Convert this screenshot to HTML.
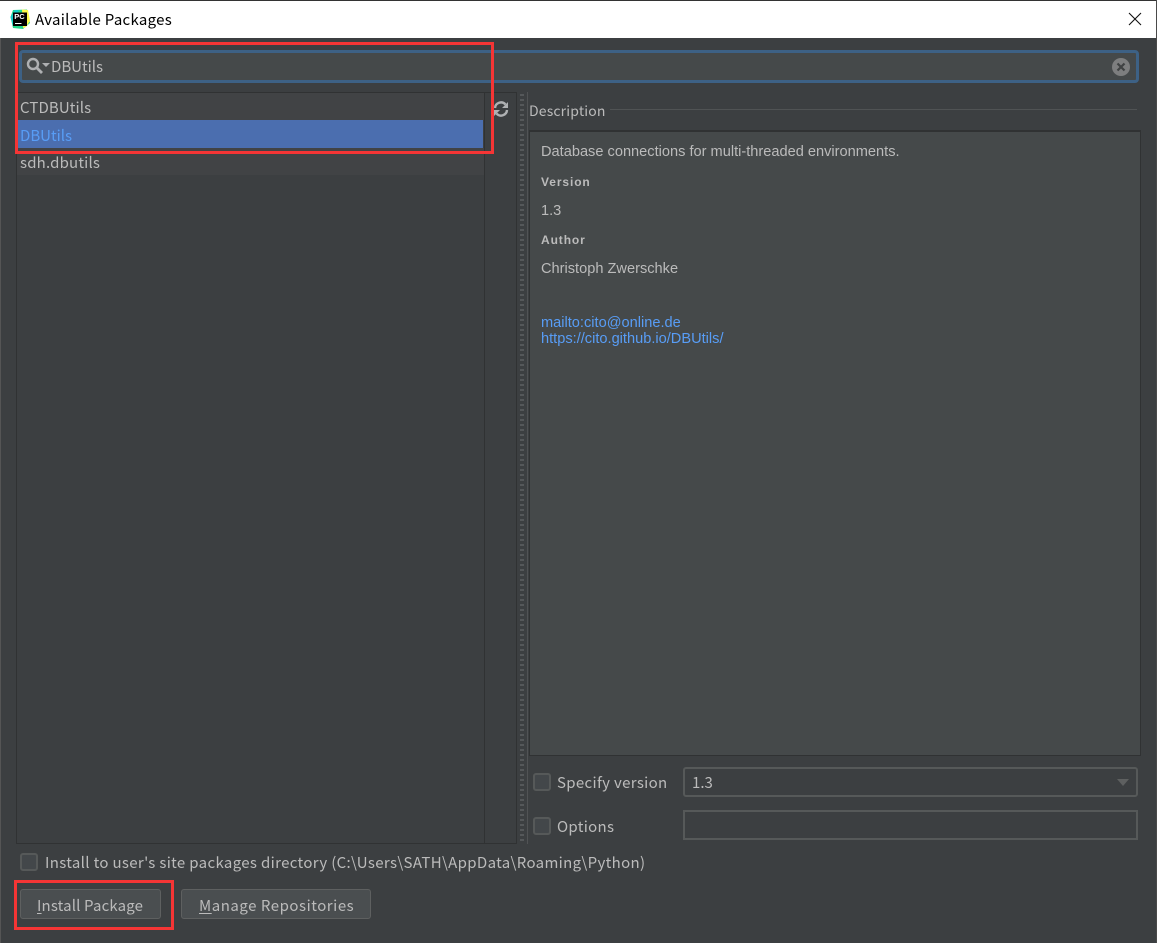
<!DOCTYPE html>
<html><head><meta charset="utf-8"><style>
html,body{margin:0;padding:0;width:1157px;height:943px;overflow:hidden;background:#3c3f41}
body{position:relative;font-family:"Noto Sans CJK SC","Liberation Sans",sans-serif;color:#bbb}
div,span.a{position:absolute;box-sizing:border-box}
.t{white-space:nowrap;font-size:15px;line-height:20px;color:#bbbbbb}
.d{white-space:nowrap;font-family:"Liberation Sans",sans-serif;font-size:14.6px;line-height:16px;color:#bbbbbb}
.b{font-weight:bold;font-size:12px;letter-spacing:.9px}
.l{color:#589df6}
.c{width:18px;height:18px;border:2px solid #565959;border-radius:3px;background:#43474a}
.btn{background:#4a4e50;border:1px solid #5e6060;border-radius:3px;height:30px;top:889px}
u{text-underline-offset:2px}
.r{border:3px solid #f53535}
</style></head><body>
<div style="left:0;top:0;width:1157px;height:38px;background:#fff;border-top:1px solid #333"></div>
<div style="left:0;top:38px;width:1px;height:905px;background:#555"></div>
<div style="left:1156px;top:0;width:1px;height:943px;background:#4a4a4a"></div>
<svg style="position:absolute;left:10px;top:9px" width="20" height="20" viewBox="0 0 20 20">
<path d="M3 1 L17 0.5 L20 14 L13 20 L3 19 L0.5 8Z" fill="#21d789"/><path d="M12 0.5 L18 1 L20 12 L16 18 L13 19Z" fill="#fcf84a"/><path d="M0.5 8 L5 1 L9 1 L3 17Z" fill="#07c3f2" opacity=".6"/>
<rect x="3" y="3.5" width="14" height="13.5" fill="#000"/><text x="4.3" y="10" font-family="Liberation Sans" font-size="7.5" font-weight="bold" fill="#fff">PC</text><rect x="5" y="14" width="6.5" height="1" fill="#fff"/></svg>
<div class="t" style="left:35px;top:10px;color:#000;letter-spacing:.28px">Available Packages</div>
<svg style="position:absolute;left:1128px;top:12px" width="14" height="14" viewBox="0 0 14 14"><path d="M1 1L13 13M13 1L1 13" stroke="#111" stroke-width="1.1" fill="none"/></svg>

<div style="left:19px;top:50px;width:1120px;height:33px;background:#45494a;border:3px solid #3d6185;border-radius:4px"></div>
<svg style="position:absolute;left:26px;top:57px" width="25" height="18" viewBox="0 0 25 18"><circle cx="7" cy="7" r="5" fill="none" stroke="#aeb0b2" stroke-width="2.4"/><path d="M10.5 10.5L16 16" stroke="#aeb0b2" stroke-width="2.8"/><path d="M16 6H24L20 10Z" fill="#aeb0b2"/></svg>
<div class="t" style="left:51px;top:57px">DBUtils</div>
<svg style="position:absolute;left:1112px;top:58px" width="18" height="18" viewBox="0 0 18 18"><circle cx="9" cy="9" r="9" fill="#7d7e7f"/><path d="M5.5 5.5L12.5 12.5M12.5 5.5L5.5 12.5" stroke="#3f4243" stroke-width="2.2"/></svg>

<div style="left:16px;top:92px;width:469px;height:752px;border:1px solid #303233"></div>
<div style="left:17px;top:93px;width:467px;height:27px;background:#414345"></div>
<div style="left:17px;top:120px;width:466px;height:28px;background:#4b6eaf"></div>
<div style="left:17px;top:148px;width:467px;height:27px;background:#414345"></div>
<div class="t" style="left:20px;top:98px;letter-spacing:.1px">CTDBUtils</div>
<div class="t l" style="left:20px;top:126px">DBUtils</div>
<div class="t" style="left:20px;top:153px;letter-spacing:.18px">sdh.dbutils</div>

<div style="left:484px;top:92px;width:33px;height:752px;border-top:1px solid #303233;border-right:1px solid #303233;border-bottom:1px solid #303233"></div>
<svg style="position:absolute;left:493px;top:101px" width="16" height="16" viewBox="0 0 16 16"><path d="M2 7A6 6 0 0 1 12.5 3.5M14 9A6 6 0 0 1 3.5 12.5" fill="none" stroke="#afb1b3" stroke-width="2.4"/><path d="M15 1V7H9ZM1 15V9H7Z" fill="#afb1b3"/></svg>
<div style="left:520px;top:94px;width:4px;height:750px;background:repeating-linear-gradient(to bottom,#55585a 0 2px,#3c3f41 2px 5px)"></div>
<div style="left:527px;top:92px;width:1px;height:752px;background:#515355"></div>

<div class="t" style="left:529px;top:101px;font-size:14px;letter-spacing:.15px">Description</div>
<div style="left:610px;top:109px;width:527px;height:1px;background:#505354"></div>
<div style="left:529px;top:130px;width:612px;height:626px;background:#45494a;border:1px solid #303233;border-top-width:2px"></div>
<div class="d" style="left:541px;top:144px">Database connections for multi-threaded environments.</div>
<div class="d b" style="left:541px;top:174px">Version</div>
<div class="d" style="left:541px;top:203px">1.3</div>
<div class="d b" style="left:541px;top:232px">Author</div>
<div class="d" style="left:541px;top:261px">Christoph Zwerschke</div>
<div class="d l" style="left:541px;top:315px">mailto:cito@online.de</div>
<div class="d l" style="left:541px;top:331px">https://cito.github.io/DBUtils/</div>

<div class="c" style="left:533px;top:773px"></div>
<div class="t" style="left:557px;top:773px;letter-spacing:.33px">Specify version</div>
<div style="left:683px;top:767px;width:455px;height:30px;background:#3c3f41;border:2px solid #565959;border-radius:3px"></div>
<div class="t" style="left:692px;top:773px">1.3</div>
<svg style="position:absolute;left:1117px;top:779px" width="12" height="7"><path d="M0 0H12L6 7Z" fill="#5e6060"/></svg>
<div class="c" style="left:533px;top:817px"></div>
<div class="t" style="left:557px;top:817px;letter-spacing:.3px">Options</div>
<div style="left:683px;top:810px;width:455px;height:30px;background:#3c3f41;border:2px solid #565959"></div>

<div class="c" style="left:20px;top:853px"></div>
<div class="t" style="left:45px;top:853px;letter-spacing:.34px">Install to user's site packages directory (C:\Users\SATH\AppData\Roaming\Python)</div>

<div class="btn" style="left:20px;width:141px"></div>
<div class="t" style="left:37px;top:896px;letter-spacing:.15px"><u>I</u>nstall Package</div>
<div class="btn" style="left:181px;width:190px"></div>
<div class="t" style="left:199px;top:896px;letter-spacing:.53px"><u>M</u>anage Repositories</div>

<div class="r" style="left:15px;top:42px;width:479px;height:112px"></div>
<div class="r" style="left:14px;top:880px;width:160px;height:50px"></div>
</body></html>
